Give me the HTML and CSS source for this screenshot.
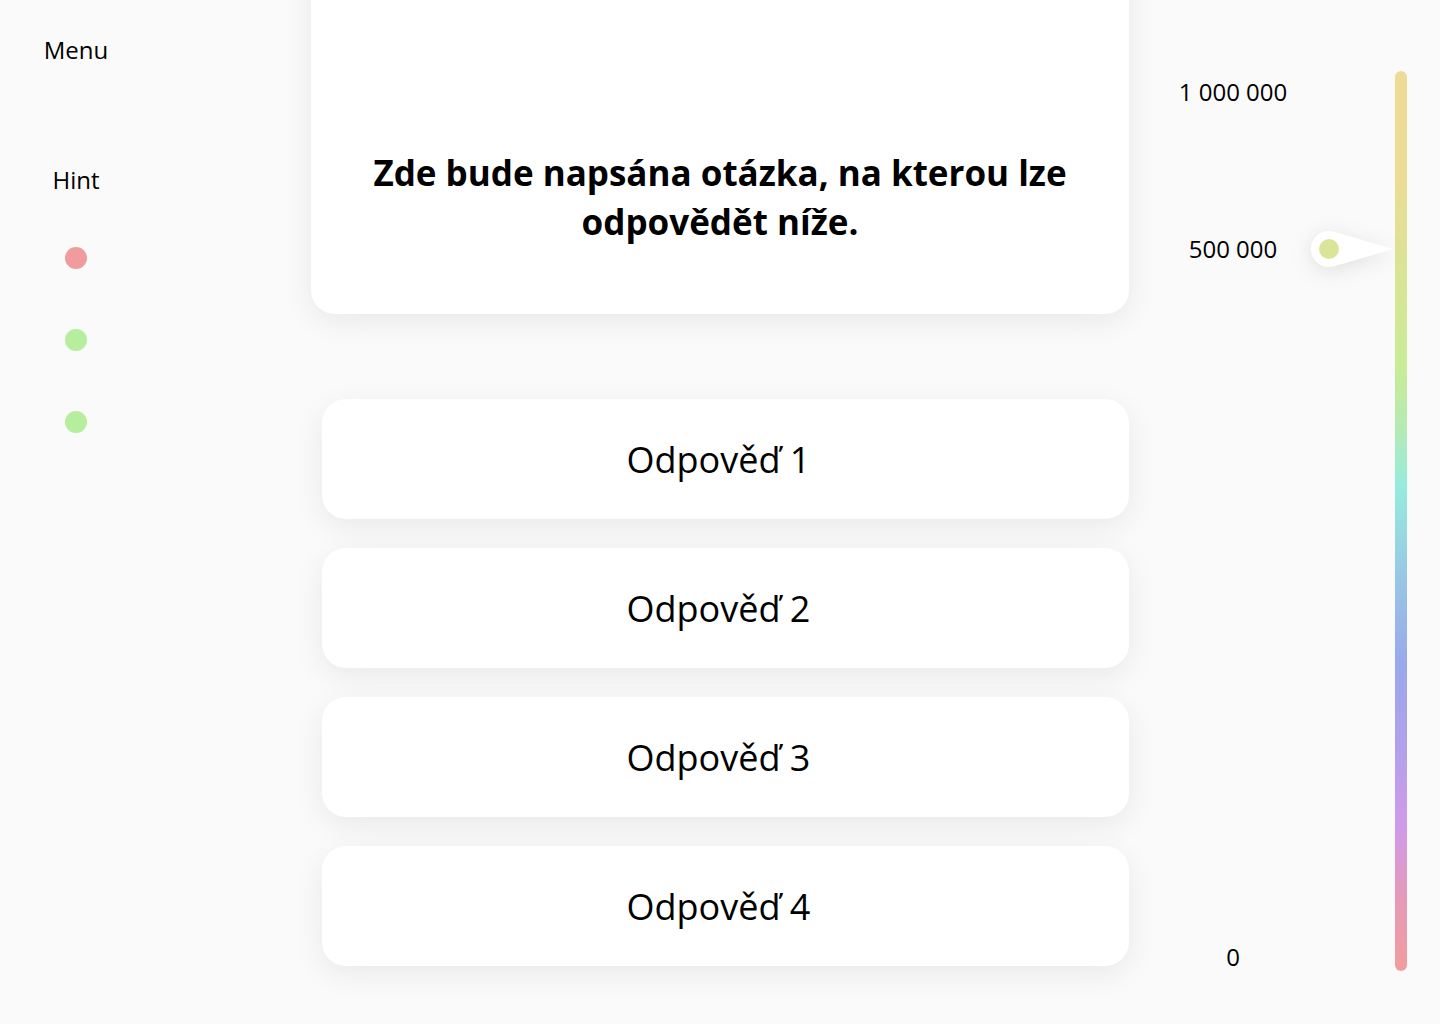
FILE: index.html
```html
<!DOCTYPE html>
<html lang="cs">
<head>
<meta charset="utf-8">
<title>Kvíz</title>
<link rel="stylesheet" href="styles.css">
</head>
<body>
<div class="app">
  <aside class="sidebar">
    <div class="menu">Menu</div>
    <div class="hint">Hint</div>
    <div class="dots">
      <span class="dot dot-red"></span>
      <span class="dot dot-green"></span>
      <span class="dot dot-green"></span>
    </div>
  </aside>

  <main class="main">
    <section class="question">
      <h1>Zde bude napsána otázka, na kterou lze odpovědět níže.</h1>
    </section>
    <div class="answers">
      <button class="answer">Odpověď 1</button>
      <button class="answer">Odpověď 2</button>
      <button class="answer">Odpověď 3</button>
      <button class="answer">Odpověď 4</button>
    </div>
  </main>

  <aside class="scale">
    <div class="labels">
      <div class="label label-top">1 000 000</div>
      <div class="label label-mid">500 000</div>
      <div class="label label-bottom">0</div>
    </div>
    <div class="track">
      <div class="bar"></div>
      <svg class="marker" width="92" height="50" viewBox="0 0 92 50">
        <path d="M86 25 L27.2 7.8 A18 18 0 1 0 27.2 42.2 Z" fill="#ffffff"/>
        <circle cx="22" cy="25" r="10" fill="#dbe59a"/>
      </svg>
    </div>
  </aside>
</div>
</body>
</html>
```

FILE: styles.css
```css
* {
  box-sizing: border-box;
}

html, body {
  margin: 0;
  padding: 0;
  background: #fafafa;
}

body {
  font-family: "Open Sans", "Noto Sans", sans-serif;
  color: #000;
  width: 1440px;
  height: 1024px;
  overflow: hidden;
}

.app {
  display: flex;
  height: 1024px;
}

/* Left sidebar */
.sidebar {
  width: 152px;
  flex: none;
  display: flex;
  flex-direction: column;
  align-items: center;
  padding-top: 33px;
}

.menu,
.hint {
  font-size: 24px;
  line-height: 33px;
}

.hint {
  margin-top: 97px;
}

.dots {
  margin-top: 51px;
  display: flex;
  flex-direction: column;
  align-items: center;
  gap: 60px;
}

.dot {
  display: block;
  width: 22px;
  height: 22px;
  border-radius: 50%;
}

.dot-red {
  background: #f09c9c;
}

.dot-green {
  background: #b5ee9c;
}

/* Main */
.main {
  width: 818px;
  flex: none;
  margin-left: 159px;
  display: flex;
  flex-direction: column;
  align-items: flex-end;
}

.question {
  width: 818px;
  margin-top: -40px;
  padding: 188px 40px 68px;
  background: #fff;
  border-radius: 24px;
  box-shadow: 0 8px 30px rgba(0, 0, 0, 0.07);
}

.question h1 {
  margin: 0;
  text-align: center;
  font-size: 35px;
  font-weight: 700;
  line-height: 49px;
}

.answers {
  margin-top: 85px;
  width: 807px;
  display: flex;
  flex-direction: column;
  gap: 29px;
}

.answer {
  height: 120px;
  width: 100%;
  border: none;
  background: #fff;
  border-radius: 24px;
  box-shadow: 0 8px 30px rgba(0, 0, 0, 0.07);
  font-family: "Open Sans", "Noto Sans", sans-serif;
  font-size: 36px;
  color: #000;
  padding: 0 14px 0 0;
  cursor: pointer;
}

/* Right scale */
.scale {
  flex: 1;
  display: flex;
}

.labels {
  width: 110px;
  margin-left: 49px;
  display: flex;
  flex-direction: column;
  align-items: center;
  padding-top: 75px;
  padding-bottom: 51px;
}

.label {
  font-size: 24px;
  line-height: 33px;
}

.label-mid {
  margin-top: 124px;
}

.label-bottom {
  margin-top: auto;
}

.track {
  position: relative;
  margin-left: 107px;
  width: 12px;
  padding-top: 71px;
}

.bar {
  width: 12px;
  height: 900px;
  border-radius: 6px;
  background: linear-gradient(
    to bottom,
    #eedb96 0%,
    #ecdc96 12%,
    #c8ec96 33%,
    #b4eab6 40%,
    #96ecdc 46%,
    #98c4e6 57%,
    #9aa8ec 66%,
    #b4a0ec 76%,
    #d09aea 84%,
    #e69ab8 92%,
    #f29c9c 100%
  );
}

.marker {
  position: absolute;
  left: -88px;
  top: 224px;
  overflow: visible;
  filter: drop-shadow(0 4px 10px rgba(0, 0, 0, 0.10));
}
```
